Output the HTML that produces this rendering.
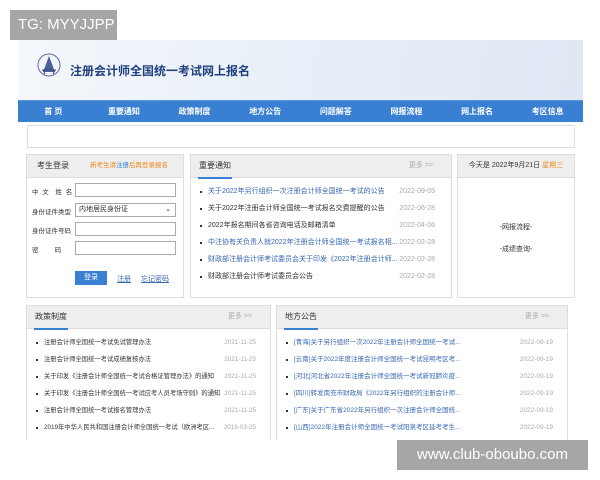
<!DOCTYPE html>
<html><head><meta charset="utf-8"><style>
*{margin:0;padding:0;box-sizing:border-box}
body{width:600px;height:480px;background:#fff;position:relative;overflow:hidden;font-family:"Liberation Sans","Noto Sans CJK SC",sans-serif;font-size:7px;color:#333}
.abs{position:absolute}
.wm{background:#a6a6a6;color:#fff;font-size:15px;line-height:30px;padding-left:8px;white-space:nowrap}
.hdr{left:18px;top:40px;width:565px;height:60px;background:linear-gradient(100deg,#f4f7fb 0%,#e8eff8 50%,#dfe8f4 100%)}
.nav{left:18px;top:100px;width:565px;height:22px;background:#3a80d2;display:flex;border-top:1px solid #5b97de}
.nav div{flex:1;text-align:center;color:#fff;font-size:8px;line-height:21px;font-weight:bold}
.box{border:1px solid #ddd;background:#fff}
.bh{height:23px;background:#eeeeee;border-bottom:1px solid #ddd;position:relative}
.bh .t{position:absolute;left:7px;top:0;line-height:22px;font-size:8px;color:#333;border-bottom:2px solid #3a80d2;padding:0 1px}
.bh .m{position:absolute;right:18px;line-height:22px;color:#aaa;font-size:7px}
ul{list-style:none}
li{position:relative;height:17px;line-height:17px;padding-left:17px;white-space:nowrap}
li:before{content:"";position:absolute;left:9px;top:8px;width:2px;height:2px;background:#333}
li .d{position:absolute;right:0;color:#aaa}
.b{color:#3767b3}
.lbl{position:absolute;left:5px;font-size:6.5px}
.inp{position:absolute;left:48px;width:101px;height:14px;border:1px solid #aaa;background:#fff}
</style></head><body>
<div class="abs wm" style="left:10px;top:10px;width:107px;height:30px">TG: MYYJJPP</div>
<div class="abs hdr">
 <svg class="abs" style="left:18px;top:12px" width="26" height="32" viewBox="0 0 26 32"><circle cx="13" cy="13" r="11" fill="none" stroke="#5a6c9a" stroke-width="1"/><path d="M13 4L7 20H19Z" fill="#4b5f9a"/><path d="M6 18H20M9 22L7 18M17 22L19 18" stroke="#34477a" stroke-width="1" fill="none"/></svg>
 <div class="abs" style="left:52px;top:22px;font-size:12px;font-weight:bold;color:#1f3f7e">注册会计师全国统一考试网上报名</div>
</div>
<div class="abs nav"><div>首 页</div><div>重要通知</div><div>政策制度</div><div>地方公告</div><div>问题解答</div><div>网报流程</div><div>网上报名</div><div>考区信息</div></div>
<div class="abs box" style="left:27px;top:125px;width:548px;height:23px"></div>

<div class="abs box" style="left:26px;top:154px;width:158px;height:144px">
 <div class="bh"><span class="abs" style="left:10px;line-height:22px;font-size:8px">考生登录</span><span class="abs" style="left:63px;line-height:22px;color:#f08a1c;font-size:6.5px">新考生请<span style="color:#3a80d2">注册</span>后再登录报名</span></div>
 <span class="lbl" style="top:31px;letter-spacing:1px">中 文 &nbsp;姓 名</span><div class="inp" style="top:28px"></div>
 <span class="lbl" style="top:51px">身份证件类型</span><div class="inp" style="top:48px;padding-left:3px;line-height:12px">内地居民身份证<span style="position:absolute;right:4px">⌄</span></div>
 <span class="lbl" style="top:70px">身份证件号码</span><div class="inp" style="top:67px"></div>
 <span class="lbl" style="top:89px">密 &nbsp; &nbsp; &nbsp; &nbsp; 码</span><div class="inp" style="top:86px"></div>
 <div class="abs" style="left:48px;top:116px;width:32px;height:14px;background:#3a80d2;color:#fff;text-align:center;line-height:14px">登录</div>
 <span class="abs b" style="left:90px;top:119px;text-decoration:underline">注册</span>
 <span class="abs b" style="left:114px;top:119px;text-decoration:underline">忘记密码</span>
</div>

<div class="abs box" style="left:190px;top:154px;width:262px;height:144px">
 <div class="bh"><span class="t">重要通知</span><span class="m">更多 &gt;&gt;</span></div>
 <ul style="padding:2px 16px 0 0;margin-top:3px">
 <li class="b">关于2022年另行组织一次注册会计师全国统一考试的公告<span class="d">2022-09-05</span></li>
 <li>关于2022年注册会计师全国统一考试报名交费提醒的公告<span class="d">2022-06-28</span></li>
 <li>2022年报名期间各省咨询电话及邮箱清单<span class="d">2022-04-06</span></li>
 <li class="b">中注协有关负责人就2022年注册会计师全国统一考试报名相...<span class="d">2022-02-28</span></li>
 <li class="b">财政部注册会计师考试委员会关于印发《2022年注册会计师...<span class="d">2022-02-28</span></li>
 <li>财政部注册会计师考试委员会公告<span class="d">2022-02-28</span></li>
 </ul>
</div>

<div class="abs box" style="left:457px;top:154px;width:118px;height:144px">
 <div class="bh" style="text-align:center;line-height:22px">今天是 2022年9月21日 <span style="color:#f08a1c">星期三</span></div>
 <div class="abs" style="left:0;width:100%;top:67px;text-align:center">-网报流程-</div>
 <div class="abs" style="left:0;width:100%;top:89px;text-align:center">-成绩查询-</div>
</div>

<div class="abs box" style="left:26px;top:305px;width:245px;height:140px;border-bottom:none">
 <div class="bh"><span class="t">政策制度</span><span class="m">更多 &gt;&gt;</span></div>
 <ul style="padding:5px 14px 0 0;font-size:6.3px">
 <li>注册会计师全国统一考试免试管理办法<span class="d">2021-11-25</span></li>
 <li>注册会计师全国统一考试成绩复核办法<span class="d">2021-11-25</span></li>
 <li>关于印发《注册会计师全国统一考试合格证管理办法》的通知<span class="d">2021-11-25</span></li>
 <li>关于印发《注册会计师全国统一考试应考人员考场守则》的通知<span class="d">2021-11-25</span></li>
 <li>注册会计师全国统一考试报名管理办法<span class="d">2021-11-25</span></li>
 <li>2019年中华人民共和国注册会计师全国统一考试（欧洲考区...<span class="d">2019-03-25</span></li>
 </ul>
</div>

<div class="abs box" style="left:276px;top:305px;width:292px;height:140px;border-bottom:none">
 <div class="bh"><span class="t">地方公告</span><span class="m">更多 &gt;&gt;</span></div>
 <ul style="padding:5px 14px 0 0;font-size:6.5px" class="b">
 <li>[青海]关于另行组织一次2022年注册会计师全国统一考试...<span class="d">2022-09-19</span></li>
 <li>[云南]关于2022年度注册会计师全国统一考试昆明考区考...<span class="d">2022-09-19</span></li>
 <li>[河北]河北省2022年注册会计师全国统一考试新冠肺炎疫...<span class="d">2022-09-19</span></li>
 <li>[四川]转发南充市财政局《2022年另行组织的注册会计师...<span class="d">2022-09-19</span></li>
 <li>[广东]关于广东省2022年另行组织一次注册会计师全国统...<span class="d">2022-09-19</span></li>
 <li>[山西]2022年注册会计师全国统一考试阳泉考区延考考生...<span class="d">2022-09-19</span></li>
 </ul>
</div>
<div class="abs" style="left:0;top:440px;width:600px;height:40px;background:#fff"></div>
<div class="abs" style="left:397px;top:440px;width:191px;height:30px;background:#a6a6a6;color:#fff;font-size:15px;line-height:30px;text-align:center">www.club-oboubo.com</div>
</body></html>
